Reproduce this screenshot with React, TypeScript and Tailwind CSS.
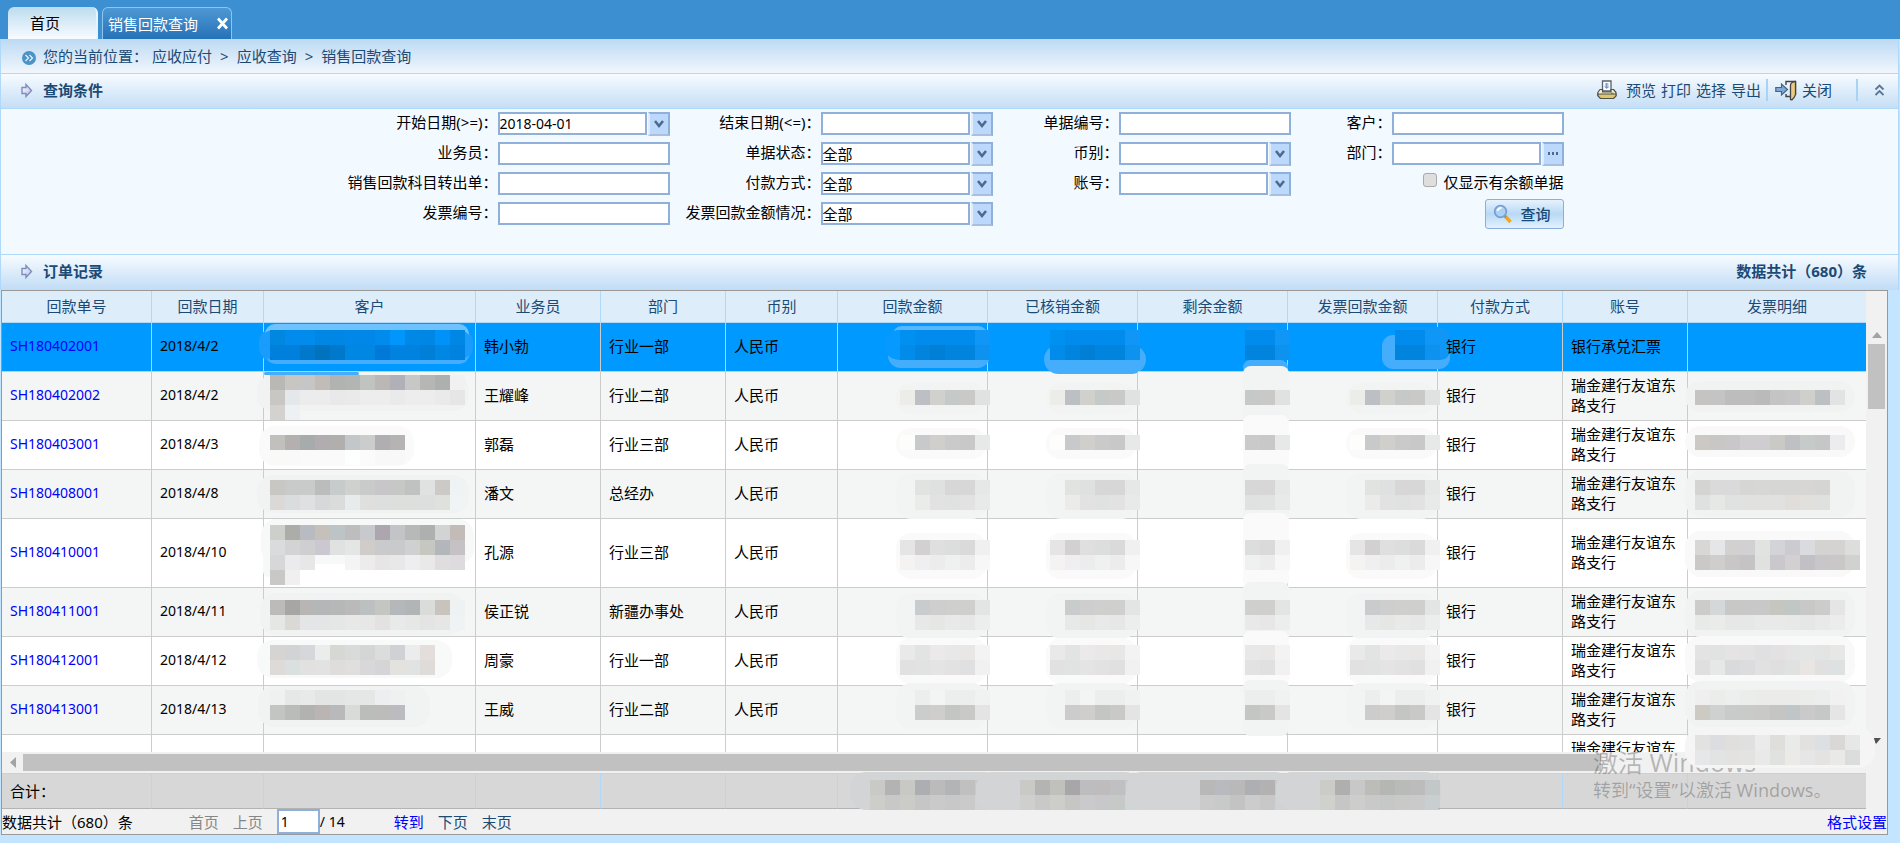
import type { ReactNode } from 'react';

type Brush = [x: number, y: number, w: number, h: number, fill: string];

type Receipt = {
  id: string;
  date: string;
  person: string;
  dept: string;
  currency: string;
  pay: string;
  account: string;
  tall?: boolean;
  client: { y: number; rows: string[]; brush?: Brush[] };
  amount: { y: number; rows: string[] };
  detail?: { y: number; rows: string[] };
};

const headers = ['回款单号', '回款日期', '客户', '业务员', '部门', '币别', '回款金额', '已核销金额', '剩余金额', '发票回款金额', '付款方式', '账号', '发票明细'];

const BANK = '瑞金建行友谊东路支行';

const records: Receipt[] = [
  {
    id: 'SH180402001', date: '2018/4/2', person: '韩小勃', dept: '行业一部', currency: '人民币', pay: '银行', account: '银行承兑汇票',
    client: {
      y: 7,
      rows: [
        '0087e0 018bec 018bec 0087e5 0087e5 0087e8 0087e8 018bec 0096fb 0088e6 0087e5 0092f8 0087e5',
        '0080dd 0080dd 0079cc 0072be 0078cc 0086e3 0086e3 0079d8 0083e0 0083e0 007fd8 0086e3 0083e0',
      ],
      brush: [[-5, 4, 214, 36, '#1a9cfc'], [1, 1, 204, 20, '#6ec2ff'], [2, 22, 203, 19, '#45aefc'], [-5, 7, 214, 30, '#1a9cfc']],
    },
    amount: {
      y: 7,
      rows: ['0090f0 018bec 018bec 018bec 018bec 1096f6', '018bea 0084de 007fd6 0084de 0084de 0e92f0'],
    },
  },
  {
    id: 'SH180402002', date: '2018/4/2', person: '王耀峰', dept: '行业二部', currency: '人民币', pay: '银行', account: BANK,
    client: {
      y: 3,
      rows: [
        'b9b8b5 c8c6c2 c5c6c5 c2bcb8 b1b3b1 b2b5b2 c0c4c0 bbb7b5 b1b0b8 c6c8c6 b6b7b5 acb0ae f0f1f0',
        'c8c7c4 e4e8ea ebeceb ebeceb e8e9e8 e9eae9 ecedec ecedec e9eae9 ecedec ecedec e9eae9 e5e6e5',
        'd4d2ce edf1f4',
      ],
      brush: [[-7, 3, 212, 36, '#f1f3f2'], [0, 0, 95, 3, '#45aefc']],
    },
    amount: { y: 18, rows: ['ecede8 bcc0c5 d0d0cd c5cac9 c9c9c8 e0e2e1'] },
    detail: { y: 18, rows: ['c5c4c3 c4c4c4 bdbdbd bdbdbd bababa c5c4c4 c6c6c8 cfcfcb bdc0c2 e2e3e3'] },
  },
  {
    id: 'SH180403001', date: '2018/4/3', person: '郭磊', dept: '行业三部', currency: '人民币', pay: '银行', account: BANK,
    client: {
      y: 14,
      rows: ['c1c0bd b4b0af a8abac b0acaf b0afae c4c7ca cbcccc b0aeb1 b5b4b2', 'f9f9f8 f9f9f9 fbfafa fbfafa fafafa fdfefe fbfbfb f8f8f8 f8f8f8'],
      brush: [[-5, 5, 155, 40, '#fafafa']],
    },
    amount: { y: 14, rows: ['fdfdfb c8c9cb d0cfcc cacacb c8c8c8 e6e9e7'] },
    detail: { y: 14, rows: ['ccc9c4 c8c7c5 c9c7c9 cfcdd0 cfcdd0 c9cac5 bfc0c4 c6cac8 c4c7c6 ececee'] },
  },
  {
    id: 'SH180408001', date: '2018/4/8', person: '潘文', dept: '总经办', currency: '人民币', pay: '银行', account: BANK,
    client: {
      y: 10,
      rows: [
        'c8c7c3 c9cbcb c9cbcb bbbdbd c8cbcb cfd1cf c9caca c9c6c9 c6c8c6 bfc2c1 e0e2e1 cccac6 eff3f4',
        'dbd8d8 dadddf e0dfe2 d6d8da dadbdb e8ebec dfe0dd dddfde dddfdd dddfdd dddfde e0e1dd f0f4f4',
      ],
      brush: [[-7, 5, 212, 38, '#f1f3f2']],
    },
    amount: { y: 10, rows: ['- e1e3e0 dfe0e0 d7d7d8 d7d7d8 e6e8e7', '- ebece9 e2e2e2 e0e1e1 e2e2e2 e8eae9'] },
    detail: {
      y: 10,
      rows: ['d4d5d3 d9dad9 d9dad9 d6d6d5 d7d8d6 d6d6d5 d6d6d5 d8d6d4 d5d5d4', 'dfe1e0 e6e8e4 dfe2e1 e1e1df e1e1df e1e1df e0dddb e2e0dd dfe1df'],
    },
  },
  {
    id: 'SH180410001', date: '2018/4/10', person: '孔源', dept: '行业三部', currency: '人民币', pay: '银行', account: BANK, tall: true,
    client: {
      y: 6,
      rows: [
        'cccfca acaca8 b8bbc2 c5c0b9 bdc4c6 bebdbe c8c9cc aea6ae c3c4c8 b8b8b9 adb0ae d2d4d4 c3bbb8',
        'd9dbdc d4d3d4 cfced0 cbc8d2 e0e1e1 e4e5e5 cfccc9 c9cacc c9cacc ced1cf c6c7c0 b3b7bb c5c1c4',
        'd8d7d7 ebebee e8e7e7 - - f4f4f4 ececed e8e5e6 e9e8e9 eeeef0 e9e9e9 dfdddd dddbdd',
        'c8c9c7 f0f0f0',
      ],
      brush: [[-3, 0, 213, 45, '#f7f8f8'], [-1, 10, 34, 48, '#f7f8f8']],
    },
    amount: { y: 21, rows: ['e5e5e5 d2d0d1 dedfde dcdedd dadada f0f0f0', 'f5f3f1 efeff2 ececed eff1f0 ececec f7f7f7'] },
    detail: {
      y: 21,
      rows: [
        'd8d7d5 e5e6e7 d3d1d0 d1d0d2 e1e3e1 d3d4d8 cbcbd0 dadbde d4d3d1 d4d3d1 dcdddc',
        'cbc9c8 d0cdcd c9c6c7 c6c3c4 dfe2de cac8cc d3d0d2 c0c0c5 c8c6c9 c9c7c7 d0d2d0',
      ],
    },
  },
  {
    id: 'SH180411001', date: '2018/4/11', person: '侯正锐', dept: '新疆办事处', currency: '人民币', pay: '银行', account: BANK,
    client: {
      y: 12,
      rows: [
        'bcbbba a8a6a5 b8b6b4 b3b7b8 b6b8b8 b9bab9 bdc0c0 c4c6c2 b4b8ba b1b5b6 dadcda c8c4bd eef2f3',
        'e5e7e5 dad9d6 e4e5e6 e4e5e6 e5e7e6 e8e9e7 e6e7e6 e3e2e0 e8eae9 e5e8e5 e3e4e3 e5e6e5 f0f3f4',
      ],
      brush: [[-4, 5, 204, 42, '#f1f3f2']],
    },
    amount: { y: 12, rows: ['- c8cccd cecece cfcfce cfcfce e3e5e4', '- e7e8e8 e6e6e5 e8e9e8 e6e7e6 eceded'] },
    detail: {
      y: 12,
      rows: ['cccdcb d4d8d9 c8c9c7 c7c8c7 c8c8c6 c5c6bf c1c7c5 c8c9c7 cccccb e5e5e5', 'e8eae9 eaecea e6e7e6 e6e8e7 e8e9e8 e8e9e8 e8e8e8 e5e7e6 e8e9e8 ebeceb'],
    },
  },
  {
    id: 'SH180412001', date: '2018/4/12', person: '周豪', dept: '行业一部', currency: '人民币', pay: '银行', account: BANK,
    client: {
      y: 8,
      rows: [
        'd6d4d3 d2d3d4 d6d7db ebecec d7d7d3 d9dbdb d6d5d5 dbdddd d0d1d4 ececed e3dedb',
        'dddad8 dadfdf e1e1e0 e3e2e2 dedddc e0dfdd d8d7d9 d5d5d8 e3e2df e1e3e2 dfdbd8',
      ],
      brush: [[-7, 3, 195, 38, '#f8f9f9']],
    },
    amount: { y: 8, rows: ['eae9ea e2e4e3 ebe9ea e9e8e8 e8e7e6 f3f3f3', 'e2e1e2 e1e3e2 e5e4e4 e2e2e3 e0e0e0 f1f1f1'] },
    detail: {
      y: 8,
      rows: ['e3e3e4 e1e3e3 e5e3e4 e4e3e4 e0dfe1 e3e1e2 e4e4e4 e4e6e5 e3e4e4 e7e7e6', 'dfdfe0 e6e8e7 d9dadc dcdcde e2e1e2 e0dfe0 e0e1e1 e8e5e2 dfe0df dde1e1'],
    },
  },
  {
    id: 'SH180413001', date: '2018/4/13', person: '王威', dept: '行业二部', currency: '人民币', pay: '银行', account: BANK,
    client: {
      y: 4,
      rows: ['eff1f0 e6e7e6 e8e9e9 e3e4e4 e3e5e4 e5e6e6 e5e6e6 eceeef eff1f0', 'c3c5c2 babcb8 b2b3b0 bab5b3 b9b8bb d8dbd8 bbbdba bcbcbb bcbbbf eff3f4'],
      brush: [[-6, 0, 172, 41, '#f1f3f2']],
    },
    amount: { y: 4, rows: ['- eceeed f2f5f4 eceeed eceeed f0f2f1', '- cccccc d0cdcd c4c6c4 c9c9c8 e3e4e3'] },
    detail: {
      y: 4,
      rows: ['eeefee ebedea edefee ebedea ebecea ebecea ebecea ebedea eceeed f0f1f0', 'cdcac3 cfd1d1 c9caca c9caca c9cac7 c5c6c4 c0c5c7 c9cac9 c5c8c7 e5e5e5'],
    },
  },
];

const totals = [
  ['c9cac6 b3b3b3 c8c8c4 adaeb1 bbbbbb b3b4b6 c0c0c0 c5cbce', 'cdcdca c8c8c8 cbccc8 c6c6c6 cacaca c8c8c9 cacaca d0d4d6'],
  ['c9cac6 b4b4b3 c0c0bd a9a6a9 bdbdc0 bfbcbe c0c0c2 c5cbce', 'cfd0cd c9c9c9 cdcdca c6c6c5 cacacc c8c8ca c7c9c7 d0d6d8'],
  ['b8b8b8 b9bac0 b9b9b9 aeafb2 b4b1b2 c5cbce', 'cbcbcb c8cac9 c3c3c3 cccccc c8c8c8 cdd3d6'],
  ['cbccc8 aeafae c8c8c8 bcbcb9 b5b7b5 b8bbb8 bcbcbc c2c7c8', 'd0d0cc c6c6c6 cdcdcc c9c9c9 c6c8c8 c9c9c8 cacaca c9ced0'],
];

const hiddenRow = [
  'e2e2e1 dcdde0 e0dfdd e0e0e0 ebebeb e0dedb e9ebea e2e1df dce0e2 d9d8d7 e6e8e7',
  'e6e7e8 e2e3e3 e4e2e0 e3e3e2 e9e9e9 e0e2df eceae7 e6e6e6 e5e3e1 e9e9e8 dadddc',
];

// censored values: brush strokes underneath, 15px blocks on top
function Mosaic({ x, y, rows, brush = [] }: { x: number; y: number; rows: string[]; brush?: Brush[] }) {
  return (
    <svg className="pointer-events-none absolute top-0 left-0 overflow-visible" width="1" height="1" aria-hidden="true">
      {brush.map(([bx, by, w, h, fill], i) => (
        <rect key={i} x={bx} y={by} width={w} height={h} rx={Math.min(16, h / 2, w / 6)} fill={fill} />
      ))}
      {rows.map((row, r) =>
        row.split(' ').map((c, i) =>
          c === '-' ? null : (
            <rect key={`${r}-${i}`} x={x + i * 15} y={y + r * 15} width="15" height="15" fill={`#${c}`} shapeRendering="crispEdges" />
          )
        )
      )}
    </svg>
  );
}

function Columns() {
  return (
    <colgroup>
      <col className="w-[150px]" />
      <col className="w-[112px]" />
      <col className="w-[212px]" />
      <col className="w-[125px]" />
      <col className="w-[125px]" />
      <col className="w-[112px]" />
      <col className="w-[150px]" />
      <col className="w-[150px]" />
      <col className="w-[150px]" />
      <col className="w-[150px]" />
      <col className="w-[125px]" />
      <col className="w-[125px]" />
      <col />
    </colgroup>
  );
}

function ArrowIcon() {
  return (
    <svg width="18" height="20" viewBox="0 0 18 20" aria-hidden="true">
      <defs>
        <linearGradient id="arrow" x1="0" y1="0" x2="1" y2="1">
          <stop offset="0" stopColor="#ffffff" />
          <stop offset="1" stopColor="#c3b4e6" />
        </linearGradient>
      </defs>
      <path d="M5 7.5h4v-3l5.500 6-5.500 6v-3H5z" fill="url(#arrow)" stroke="#7890bd" strokeWidth="1.400" />
    </svg>
  );
}

function PrinterIcon() {
  return (
    <svg width="20" height="20" viewBox="0 0 20 20" aria-hidden="true">
      <path d="M5.500 1h8.500v10H5.500z" fill="#fdfdfd" stroke="#59616b" strokeWidth="1.300" />
      <path d="M8 3h3.500v5H8z" fill="#b7cbe2" />
      <path d="M9.700 3v5M7.700 6.500l2 2 2-2" fill="none" stroke="#6b93c4" />
      <path d="M3 9.500h2.500V12H14V9.500h2.500l2.500 3v3H.8v-3z" fill="#f6f2da" stroke="#4f4f4f" strokeWidth="1.200" strokeLinejoin="round" />
      <path d="M1 14h18v2l-2.500 2.500h-13L1 16z" fill="#dfc766" stroke="#4f4f4f" strokeWidth="1.100" strokeLinejoin="round" />
      <path d="M14 13.300h2.500" stroke="#4a9c3c" strokeWidth="1.500" />
    </svg>
  );
}

function ExitIcon() {
  return (
    <svg width="22" height="21" viewBox="0 0 22 21" aria-hidden="true">
      <path d="M11 5V1.500h9.500v13.500" fill="#eef4fb" stroke="#444" strokeWidth="1.400" />
      <path d="M11 14v2.500h4.500" fill="none" stroke="#444" strokeWidth="1.400" />
      <path d="M20.500 1.500c-2.500 0-5 1.500-5 3.500v14.500l1.500.3 2.500-3 1-2.300z" fill="#eccb80" stroke="#444" strokeWidth="1.300" strokeLinejoin="round" />
      <path d="M.8 7.500h5.700V4l6 5.500-6 5.500v-3.500H.8z" fill="#7fa9d6" stroke="#49637f" strokeWidth="1.200" />
    </svg>
  );
}

function SearchIcon() {
  return (
    <svg width="20" height="20" viewBox="0 0 20 20" aria-hidden="true">
      <path d="M12 12l5.500 6" stroke="#f5a70d" strokeWidth="3.400" />
      <path d="M11 11.500l2 2" stroke="#8a8f98" strokeWidth="2" />
      <circle cx="7.500" cy="7.500" r="5.800" fill="#a9d2f6" stroke="#7a9fd0" strokeWidth="1.800" />
      <path d="M4.500 7a3.500 3.500 0 0 1 4-3" fill="none" stroke="#fff" strokeWidth="1.800" />
    </svg>
  );
}

const boxClass = 'h-[23px] min-w-0 border-2 border-[#8fb0db] bg-white text-black outline-none';
const dropClass = 'ml-px flex h-[24px] w-[22px] items-center justify-center border-2 border-[#e3edf9] border-t-[#8fb0db] border-b-[#a9bfe0] border-r-[#8fb0db] bg-[#bcd8fb]';

function Chevron() {
  return (
    <svg width="10" height="10" viewBox="0 0 10 10" aria-hidden="true">
      <path d="M1 2l4 5 4-5" fill="none" stroke="#4c6a8f" strokeWidth="2.600" />
    </svg>
  );
}

function Label({ id, children }: { id: string; children: ReactNode }) {
  return (
    <label htmlFor={id} className="text-right whitespace-nowrap">
      {children}：
    </label>
  );
}

function TextField({ id }: { id: string }) {
  return <input id={id} type="text" className={boxClass} />;
}

function PickField({ id, value = '', dots }: { id: string; value?: string; dots?: boolean }) {
  return (
    <div className="flex items-start">
      <input id={id} type="text" defaultValue={value} className={`${boxClass} flex-1 text-[14px]`} />
      <button type="button" aria-label="选择" className={dropClass}>
        {dots ? (
          <svg width="12" height="4" viewBox="0 0 12 4" aria-hidden="true">
            <path d="M1 0h2v3H1zM5 0h2v3H5zM9 0h2v3H9z" fill="#4c6a8f" />
          </svg>
        ) : (
          <Chevron />
        )}
      </button>
    </div>
  );
}

function SelectField({ id, options }: { id: string; options: string[] }) {
  return (
    <div className="flex items-start">
      <select id={id} className={`${boxClass} flex-1 appearance-none leading-[18px]`}>
        {options.map((o) => (
          <option key={o}>{o}</option>
        ))}
      </select>
      <span className={dropClass}>
        <Chevron />
      </span>
    </div>
  );
}

const cell = 'relative border-r border-b border-[#ccc] px-2 pb-0.5 last:border-r-0';

function AmountCells({ record, selected, even }: { record: Receipt; selected: boolean; even: boolean }) {
  const { y, rows } = record.amount;
  const tail = rows.map((r) => r.split(' ').slice(3).join(' '));
  const h = rows.length * 15;
  const soft = even ? '#f2f4f3' : '#fafafa';
  const wide: Brush[] = selected
    ? [[54, 3, 96, 20, '#58b7ff'], [50, 20, 102, 25, '#45aefc'], [46, 7, 108, 30, '#0699ff']]
    : [[58, y - 7, 91, h + 16, soft]];
  const low: Brush[] = selected ? [[56, 22, 102, 29, '#45aefc'], [62, 10, 90, 27, '#1096f6']] : wide;
  const left: Brush[] = selected
    ? [[107, 3, 34, 30, '#1096f6'], [105, 37, 45, 15, '#45aefc']]
    : [[105, -6, 46, record.tall ? 74 : 56, soft]];
  const last: Brush[] = selected ? [[94, 12, 68, 34, '#45aefc'], [107, 4, 55, 33, '#1096f6']] : wide;
  return (
    <>
      <td className={cell}><Mosaic x={62} y={y} rows={rows} brush={wide} /></td>
      <td className={cell}><Mosaic x={62} y={y} rows={rows} brush={low} /></td>
      <td className={cell}><Mosaic x={107} y={y} rows={tail} brush={left} /></td>
      <td className={cell}><Mosaic x={selected ? 107 : 62} y={y} rows={selected ? tail : rows} brush={last} /></td>
    </>
  );
}

export default function App() {
  return (
    <div className="flex h-screen flex-col overflow-hidden bg-[#c3e5ff] pb-2 font-['Noto_Sans','Noto_Sans_CJK_SC',sans-serif] text-[15px] leading-5 text-black">
      {/* Tabs */}
      <nav className="flex h-[39px] shrink-0 items-end gap-1 bg-[#3c8fd0] pl-2">
        <button type="button" className="flex h-8 w-[90px] items-center rounded-t-md border-r-2 border-[#e6f4ff] bg-linear-to-b from-[#bcdcf0] to-[#f8fcff] pl-[22px]">
          首页
        </button>
        <div className="flex h-8 w-[130px] items-center justify-between rounded-t-md border border-b-0 border-[#8fc4ec] bg-linear-to-b from-[#4d98d3] to-[#2672b8] pr-[2px] pl-[5px] text-white">
          <button type="button">销售回款查询</button>
          <button type="button" aria-label="关闭标签">
            <svg width="13" height="13" viewBox="0 0 13 13" aria-hidden="true">
              <path d="M2 1.500l9 10M11 1.500l-9 10" stroke="#fff" strokeWidth="2.800" />
            </svg>
          </button>
        </div>
      </nav>

      <div className="mr-px flex shrink-0 flex-col border-x border-[#b0d8f8]">
        {/* Breadcrumb */}
        <div className="flex h-[35px] items-center border-b border-[#b0d8f8] bg-linear-to-b from-[#bcdaf3] to-[#f1f6fc] pl-[20px] text-[#1b4a75]">
          <svg width="16" height="16" viewBox="0 0 16 16" className="mt-1 mr-[6px]" aria-hidden="true">
            <circle cx="8" cy="8" r="7" fill="#4b93c6" />
            <path d="M4.500 5l3 3-3 3M8.500 5l3 3-3 3" fill="none" stroke="#e8f4ff" strokeWidth="1.200" />
          </svg>
          <span className="mr-1">您的当前位置：</span>
          <a href="#ar">应收应付</a>
          <span className="mx-2">&gt;</span>
          <a href="#query">应收查询</a>
          <span className="mx-2">&gt;</span>
          <a href="#current">销售回款查询</a>
        </div>

        <div className="flex h-[35px] items-center border-b border-[#b0d8f8] bg-linear-to-b from-[#f7fbff] to-[#c5def5] pr-[13px] pb-0.5 pl-4 text-[#1b4a75]">
          <ArrowIcon />
          <h2 className="ml-2 flex-1 font-bold">查询条件</h2>
          <div className="flex items-center gap-[5px]">
            <PrinterIcon />
            <button type="button" className="ml-1">预览</button>
            <button type="button">打印</button>
            <button type="button">选择</button>
            <button type="button">导出</button>
            <span className="h-[22px] w-[2px] bg-[#a9d3f5]" />
            <button type="button" className="ml-[2px] flex items-center gap-[5px]">
              <ExitIcon />
              关闭
            </button>
          </div>
          <span className="mr-4 ml-6 h-[22px] w-[2px] bg-[#a9d3f5]" />
          <button type="button" aria-label="收起">
            <svg width="11" height="12" viewBox="0 0 11 12" aria-hidden="true">
              <path d="M1.500 5.500l4-4 4 4M1.500 11l4-4 4 4" fill="none" stroke="#5a7597" strokeWidth="1.800" />
            </svg>
          </button>
        </div>

        {/* Filters */}
        <form
          onSubmit={(e) => e.preventDefault()}
          className="grid auto-rows-[23px] grid-cols-[162px_172px_151px_172px_126px_172px_101px_172px] items-start justify-center gap-y-[7px] bg-[#f2f9ff] pt-[3px] pb-[29px]"
        >
          <Label id="start">开始日期(&gt;=)</Label>
          <PickField id="start" value="2018-04-01" />
          <Label id="end">结束日期(&lt;=)</Label>
          <PickField id="end" />
          <Label id="bill">单据编号</Label>
          <TextField id="bill" />
          <Label id="client">客户</Label>
          <TextField id="client" />

          <Label id="sales">业务员</Label>
          <TextField id="sales" />
          <Label id="state">单据状态</Label>
          <SelectField id="state" options={['全部']} />
          <Label id="currency">币别</Label>
          <SelectField id="currency" options={['']} />
          <Label id="dept">部门</Label>
          <PickField id="dept" dots />

          <Label id="transfer">销售回款科目转出单</Label>
          <TextField id="transfer" />
          <Label id="pay">付款方式</Label>
          <SelectField id="pay" options={['全部']} />
          <Label id="account">账号</Label>
          <SelectField id="account" options={['']} />
          <label className="col-span-2 flex items-center gap-[6px] justify-self-end whitespace-nowrap">
            <input type="checkbox" className="mb-1 size-[14px] appearance-none rounded-[3px] border border-[#aaa] bg-[#dedede]" />
            仅显示有余额单据
          </label>

          <Label id="invoice">发票编号</Label>
          <TextField id="invoice" />
          <Label id="invoiceState">发票回款金额情况</Label>
          <SelectField id="invoiceState" options={['全部']} />
          <button
            type="submit"
            className="col-span-4 flex h-[30px] w-[79px] items-center gap-2 self-center justify-self-end rounded-[3px] border border-[#8aaedd] bg-linear-to-b from-[#e6f2fd] via-[#b9d9f5] to-[#e3f1fd] pl-[7px] font-medium text-[#1b4a75]"
          >
            <SearchIcon />
            查询
          </button>
        </form>

        <div className="flex h-[36px] items-center justify-between border-t border-[#b0d8f8] bg-linear-to-b from-[#f7fbff] to-[#c1dcf5] pr-[31px] pb-[3px] pl-4 font-bold text-[#1b4a75]">
          <div className="flex items-center gap-2">
            <ArrowIcon />
            <h2>订单记录</h2>
          </div>
          <span>数据共计（680）条</span>
        </div>
      </div>

      {/* Table */}
      <div className="relative mr-3 ml-px flex min-h-0 flex-1 flex-col border border-[#999] bg-[#f1f1f1]">
        <div className="flex min-h-0 flex-1">
          <div className="flex min-w-0 flex-1 flex-col">
            <div className="flex min-h-0 flex-1 flex-col overflow-hidden bg-white">
              <table className="w-full table-fixed border-separate border-spacing-0">
                <Columns />
                <thead>
                  <tr className="h-8 bg-[#deedfa] text-[#1b4a75]">
                    {headers.map((h) => (
                      <th key={h} scope="col" className="border-r border-b border-[#b0d8f8] pb-0.5 font-normal last:border-r-0">
                        {h}
                      </th>
                    ))}
                  </tr>
                </thead>
                <tbody>
                  {records.map((r, i) => {
                    const selected = i === 0;
                    const even = i % 2 === 1;
                    const soft = even ? '#f1f3f2' : '#f9f9f9';
                    return (
                      <tr key={r.id} className={`${r.tall ? 'h-[69px]' : 'h-[49px]'} ${selected ? 'bg-[#0099ff]' : even ? 'bg-[#f4f6f5]' : 'bg-white'}`}>
                        <td className={`${cell} text-[14px]`}>
                          <a href={`#${r.id}`} className="text-[#0000ff]">{r.id}</a>
                        </td>
                        <td className={`${cell} text-[14px]`}>{r.date}</td>
                        <td className={cell}><Mosaic x={6} {...r.client} /></td>
                        <td className={cell}>{r.person}</td>
                        <td className={cell}>{r.dept}</td>
                        <td className={cell}>{r.currency}</td>
                        <AmountCells record={r} selected={selected} even={even} />
                        <td className={cell}>{r.pay}</td>
                        <td className={cell}>{r.account}</td>
                        <td className={cell}>
                          {r.detail && (
                            <Mosaic x={7} {...r.detail} brush={[[-3, r.detail.y - 9, 170, r.detail.rows.length * 15 + 16, soft]]} />
                          )}
                        </td>
                      </tr>
                    );
                  })}
                  <tr className="h-[49px] bg-white">
                    {headers.map((h) => (
                      <td key={h} className={cell}>{h === '账号' ? BANK : ''}</td>
                    ))}
                  </tr>
                </tbody>
              </table>
            </div>

            <div className="flex h-[21px] shrink-0 items-center gap-[6px] pl-2">
              <svg width="7" height="11" viewBox="0 0 7 11" aria-hidden="true">
                <path d="M6 0v11L0 5.500z" fill="#a3a3a3" />
              </svg>
              <div className="h-[17px] w-[85%] bg-[#c1c1c1]" />
            </div>

            <table className="w-full shrink-0 table-fixed border-separate border-spacing-0">
              <Columns />
              <tbody>
                <tr className="h-9 bg-[#d7d7d7]">
                  {headers.map((h, i) => (
                    <td key={h} className="relative border-t border-r border-b border-[#b0d8f8] border-b-[#b3b3b3] px-2 last:border-r-0">
                      {i === 0 && '合计：'}
                      {i > 5 && i < 10 && (
                        <Mosaic x={i === 8 ? 62 : 32} y={6} rows={totals[i - 6]} brush={[[i === 6 ? 12 : -12, -2, i === 6 ? 150 : 165, 38, '#d3d4d5']]} />
                      )}
                    </td>
                  ))}
                </tr>
              </tbody>
            </table>
          </div>

          <div className="flex w-[21px] shrink-0 flex-col items-center pt-[41px]">
            <svg width="10" height="6" viewBox="0 0 10 6" aria-hidden="true">
              <path d="M5 0l5 6H0z" fill="#a3a3a3" />
            </svg>
            <div className="mt-[6px] h-[65px] w-[17px] bg-[#c1c1c1]" />
            <svg width="8" height="6" viewBox="0 0 8 6" className="mt-auto mb-[65px]" aria-hidden="true">
              <path d="M0 0h8L3 6z" fill="#505050" />
            </svg>
          </div>
        </div>

        {/* Pager */}
        <div className="flex h-[25px] shrink-0 items-center">
          <span>数据共计（680）条</span>
          <button type="button" disabled className="ml-14 text-[#868686]">首页</button>
          <button type="button" disabled className="ml-[14px] text-[#868686]">上页</button>
          <input aria-label="页码" type="text" defaultValue="1" className="ml-[14px] h-[25px] w-[43px] border-2 border-[#8fb0db] bg-white pl-[2px] text-[14px]" />
          <span className="w-[74px] text-[14px]">/ 14</span>
          <a href="#goto" className="text-[#0000ff]">转到</a>
          <a href="#next" className="ml-[14px] text-[#1b4a75]">下页</a>
          <a href="#last" className="ml-[14px] text-[#1b4a75]">末页</a>
          <a href="#format" className="ml-auto text-[#0000ff]">格式设置</a>
        </div>

        {/* System watermark, with the last covered value over it */}
        <div className="pointer-events-none absolute right-[56px] bottom-[32px] w-[238px] whitespace-nowrap text-black/25">
          <p className="text-[25px] leading-8">激活 Windows</p>
          <p className="text-[18px] leading-6">转到“设置”以激活 Windows。</p>
        </div>
        <div className="pointer-events-none absolute right-[199px] bottom-[99px] size-0">
          <Mosaic x={7} y={0} rows={hiddenRow} brush={[[-3, -7, 190, 40, '#f4f5f4']]} />
        </div>
      </div>
    </div>
  );
}
